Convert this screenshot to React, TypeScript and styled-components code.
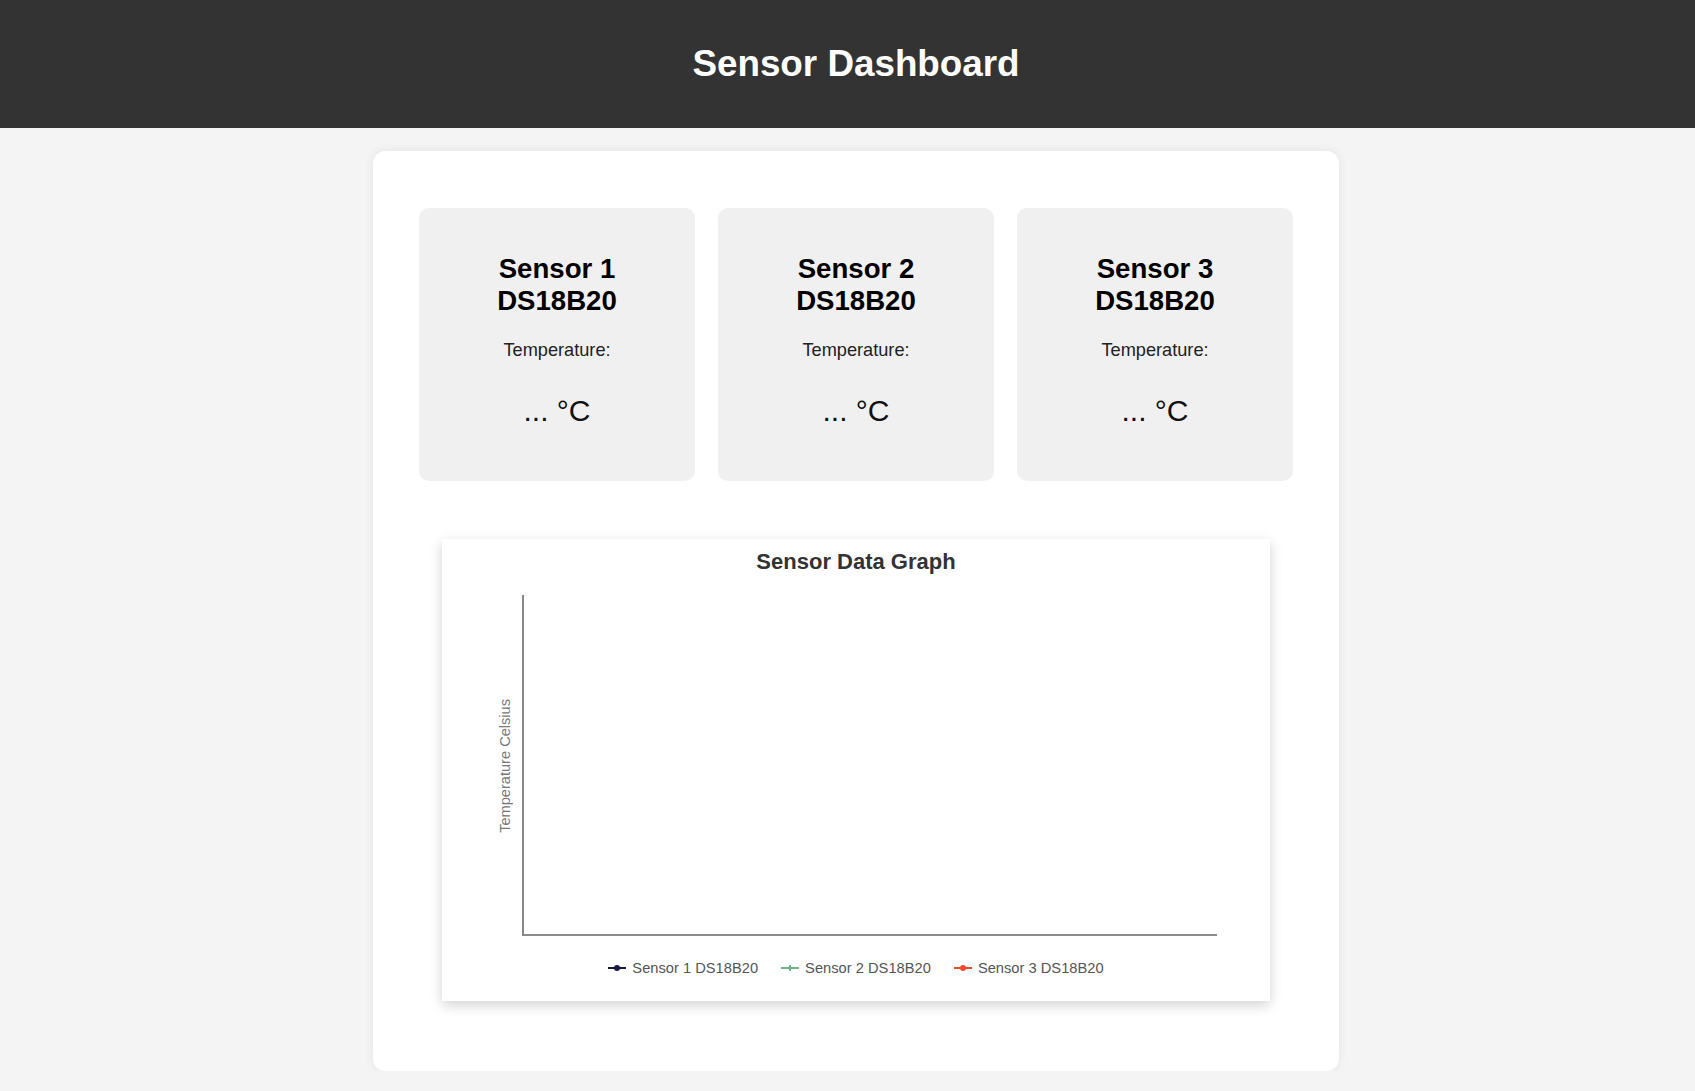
import styled, { createGlobalStyle } from "styled-components";

const GlobalStyle = createGlobalStyle`
    html, body {
        margin: 0;
        padding: 0;
        background-color: #f4f4f4;
        font-family: "Liberation Sans", Arial, sans-serif;
    }
`

// the whole page sits a little right of centre in the original
const Page = styled.div`
    padding-left: 17px;
`

const Header = styled.header`
    height: 128px;
    margin-left: -17px;
    padding-left: 17px;
    background-color: #333333;
    display: flex;
    justify-content: center;
    align-items: center;
`

const Title = styled.h1`
    margin: 0;
    color: white;
    font-size: 36.8px;
    font-weight: 700;
    line-height: 1;
`

const Container = styled.main`
    width: 966px;
    box-sizing: border-box;
    margin: 23px auto 0;
    padding: 57px 46px 70px;
    background-color: white;
    border-radius: 12px;
    box-shadow: 0 0 10px rgba(0, 0, 0, 0.08);
`

const CardGrid = styled.div`
    display: grid;
    grid-template-columns: repeat(3, 1fr);
    gap: 23px;
`

const SensorCard = styled.div`
    height: 273px;
    box-sizing: border-box;
    padding-top: 45px;
    background-color: #f0f0f0;
    border-radius: 10px;
    display: flex;
    flex-direction: column;
    align-items: center;
    text-align: center;
`

const SensorName = styled.h2`
    margin: 0;
    font-size: 27.6px;
    font-weight: 700;
    color: #000;
`

const Label = styled.p`
    margin: 23px 0 0;
    font-size: 18.2px;
    color: #222;
`

const Reading = styled.p`
    margin: 33px 0 0;
    font-size: 30px;
    color: #111;
`

const GraphBox = styled.section`
    margin: 58px 23px 0;
    padding: 10px 53px 25px 55px;
    background-color: white;
    box-shadow: 0 4px 12px rgba(0, 0, 0, 0.18);
    display: flex;
    flex-direction: column;
`

const GraphTitle = styled.h3`
    margin: 0 -53px 0 -55px;
    text-align: center;
    font-size: 22px;
    font-weight: 700;
    color: #333;
`

const ChartRow = styled.div`
    margin-top: 20px;
    display: flex;
    align-items: center;
    gap: 9px;
`

const AxisLabel = styled.span`
    width: 16px;
    writing-mode: vertical-rl;
    transform: rotate(180deg);
    font-size: 14.6px;
    line-height: 16px;
    color: #777;
    text-align: center;
`

const Plot = styled.div`
    flex: 1;
    height: 341px;
    box-sizing: border-box;
    border-left: 2px solid #888;
    border-bottom: 2px solid #8c8c8c;
`

const Legend = styled.div`
    margin: 24px -53px 0 -55px;
    display: flex;
    justify-content: center;
    gap: 23px;
`

const LegendItem = styled.div`
    display: flex;
    align-items: center;
    gap: 6px;
    font-size: 14.7px;
    line-height: 16px;
    color: #555;
`

type MarkerProps = {
    color: string,
    cross?: boolean
}

const Marker = ({ color, cross }: MarkerProps) => (
    <svg width="18" height="10" viewBox="0 0 18 10">
        <line x1="0" y1="5" x2="18" y2="5" stroke={color} strokeWidth="2" />
        {cross
            ? <line x1="9" y1="2" x2="9" y2="8" stroke={color} strokeWidth="2" />
            : <circle cx="9" cy="5" r="3" fill={color} />}
    </svg>
)

const sensors = [
    { id: 1, color: "#141a40" },
    { id: 2, color: "#6fb58c", cross: true },
    { id: 3, color: "#f04a2a" },
]

const App = () => {
    return (
        <Page>
            <GlobalStyle />
            <Header>
                <Title>Sensor Dashboard</Title>
            </Header>
            <Container>
                <CardGrid>
                    {sensors.map((sensor) => (
                        <SensorCard key={sensor.id}>
                            <SensorName>Sensor {sensor.id}<br />DS18B20</SensorName>
                            <Label>Temperature:</Label>
                            <Reading>... °C</Reading>
                        </SensorCard>
                    ))}
                </CardGrid>
                <GraphBox>
                    <GraphTitle>Sensor Data Graph</GraphTitle>
                    <ChartRow>
                        <AxisLabel>Temperature Celsius</AxisLabel>
                        <Plot />
                    </ChartRow>
                    <Legend>
                        {sensors.map((sensor) => (
                            <LegendItem key={sensor.id}>
                                <Marker color={sensor.color} cross={sensor.cross} />
                                Sensor {sensor.id} DS18B20
                            </LegendItem>
                        ))}
                    </Legend>
                </GraphBox>
            </Container>
        </Page>
    )
}

export default App;
